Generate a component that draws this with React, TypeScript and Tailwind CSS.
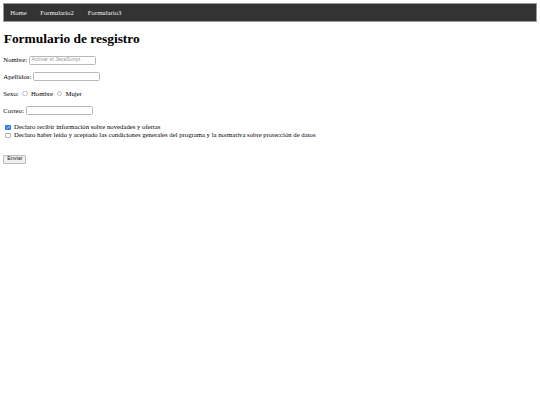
import React from "react";

const serif = "font-['Liberation_Serif','Times_New_Roman',serif]";
const sans = "font-['Liberation_Sans',Arial,sans-serif]";

export default function App() {
  return (
    <div className={`${serif} min-h-screen bg-white px-[3.3px] pt-[3px] text-[6.72px] leading-[7.7px] text-black`}>
      <nav className="flex h-[19px] items-center border border-[#9a9a9a] bg-[#333333] text-[6.72px] text-[#f2f2f2]">
        <a className="ml-[6px]">Home</a>
        <a className="ml-[13.5px]">Formulario2</a>
        <a className="ml-[14px]">Formulario3</a>
      </nav>

      <h1 className="ml-[0.4px] mt-[8.6px] text-[13.44px] font-bold leading-[15.5px]">Formulario de resgistro</h1>

      <div className="mt-[9px] flex h-[10px] items-center">
        <span>Nombre:</span>
        <div className={`${sans} ml-[1.8px] flex h-[9px] w-[67px] items-center rounded-[1.5px] border border-[#b8b8b8] px-[1.5px] text-[5.4px] text-[#9a9a9a]`}>
          Activar el JavaScript
        </div>
      </div>

      <div className="mt-[6.9px] flex h-[10px] items-center">
        <span>Apellidos:</span>
        <div className="ml-[1.8px] h-[9px] w-[67px] rounded-[1.5px] border border-[#b8b8b8]" />
      </div>

      <div className="mt-[6.6px] flex h-[10px] items-center">
        <span>Sexo:</span>
        <span className="ml-[3.6px] h-[5.4px] w-[5.4px] rounded-full border border-[#bdbdbd]" />
        <span className="ml-[3.4px]">Hombre</span>
        <span className="ml-[4px] h-[5.4px] w-[5.4px] rounded-full border border-[#bdbdbd]" />
        <span className="ml-[3px]">Mujer</span>
      </div>

      <div className="mt-[6.9px] flex h-[10px] items-center">
        <span>Correo:</span>
        <div className="ml-[1.8px] h-[9px] w-[67px] rounded-[1.5px] border border-[#b8b8b8]" />
      </div>

      <div className="mt-[7.8px] flex h-[8px] items-center">
        <span className="ml-[2px] flex h-[5.4px] w-[5.4px] items-center justify-center rounded-[1px] bg-[#2f7be8]">
          <svg viewBox="0 0 10 10" className="h-[4.6px] w-[4.6px]">
            <path d="M2 5.2 L4.2 7.3 L8 2.8" fill="none" stroke="white" strokeWidth="1.6" />
          </svg>
        </span>
        <span className="ml-[3.4px]">Declaro recibir información sobre novedades y ofertas</span>
      </div>
      <div className="flex h-[8px] items-center">
        <span className="ml-[2px] h-[5.4px] w-[5.4px] rounded-[1px] border border-[#b4b4b4]" />
        <span className="ml-[3.4px]">
          Declaro haber leído y aceptado las condiciones generales del programa y la normativa sobre protección de datos
        </span>
      </div>

      <div className="mt-[15.5px]">
        <button className={`${sans} flex h-[8.8px] w-[23px] items-center justify-center rounded-[1px] border border-[#bcbcbc] bg-[#efefef] text-[5.4px] text-[#222]`}>
          Enviar
        </button>
      </div>
    </div>
  );
}
